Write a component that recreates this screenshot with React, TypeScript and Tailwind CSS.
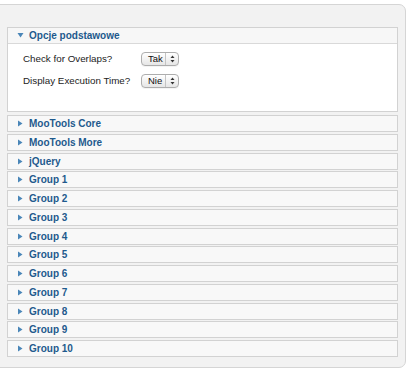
import React from "react";

const groups = [
  "MooTools Core",
  "MooTools More",
  "jQuery",
  "Group 1",
  "Group 2",
  "Group 3",
  "Group 4",
  "Group 5",
  "Group 6",
  "Group 7",
  "Group 8",
  "Group 9",
  "Group 10",
];

const font = { fontFamily: '"Liberation Sans", Arial, sans-serif' };

const ArrowRight = () => (
  <svg width="5" height="7" viewBox="0 0 5 7" className="shrink-0">
    <path d="M0 0.5 L4.5 3.5 L0 6.5 Z" fill="#4a86b8" />
  </svg>
);

const ArrowDown = () => (
  <svg width="7" height="5" viewBox="0 0 7 5" className="shrink-0">
    <path d="M0.5 0 L6.5 0 L3.5 4.5 Z" fill="#4a86b8" />
  </svg>
);

const FakeSelect: React.FC<{ value: string }> = ({ value }) => (
  <div className="flex h-[14px] w-[38px] items-center rounded-[4px] border border-[#adadad] bg-gradient-to-b from-white to-[#e6e6e6] shadow-[0_1px_0_#f4f4f4]">
    <span className="w-[23px] pl-[6px] text-[9.5px] leading-none text-[#111]">
      {value}
    </span>
    <div className="h-full w-px bg-[#c4c4c4]" />
    <svg width="5" height="8" viewBox="0 0 5 8" className="ml-[4px]">
      <path d="M0.5 3 L2.5 0.5 L4.5 3 Z" fill="#333" />
      <path d="M0.5 5 L2.5 7.5 L4.5 5 Z" fill="#333" />
    </svg>
  </div>
);

const Row: React.FC<{ label: string; value: string }> = ({ label, value }) => (
  <div className="flex h-[22px] items-center">
    <span className="w-[118px] text-[9.8px] text-[#222]">{label}</span>
    <FakeSelect value={value} />
  </div>
);

export default function App() {
  return (
    <div className="h-[371px] w-[414px] bg-white" style={font}>
      <div className="ml-[-1px] mt-[4px] flex w-[407px] flex-col rounded-r-[7px] border border-[#d5d5d5] bg-[#f2f2f2] pb-[10px] pl-[7px] pr-[7px] pt-[22px]">
        <div className="flex flex-col border border-[#d2d2d2] bg-white">
          <div className="flex h-[16px] items-center gap-[5px] border-b border-[#d9d9d9] bg-[#f7f7f7] pl-[9px]">
            <ArrowDown />
            <span className="text-[10px] font-bold text-[#1e5a8d]">Opcje podstawowe</span>
          </div>
          <div className="flex h-[67px] flex-col pl-[15px] pt-[4px]">
            <Row label="Check for Overlaps?" value="Tak" />
            <Row label="Display Execution Time?" value="Nie" />
          </div>
        </div>
        <div className="mt-[3px] flex flex-col gap-[1.75px]">
          {groups.map((g) => (
            <div
              key={g}
              className="flex h-[17px] items-center gap-[6px] border border-[#d2d2d2] bg-[#f8f8f8] pl-[10px]"
            >
              <ArrowRight />
              <span className="text-[10px] font-bold text-[#1e5a8d]">{g}</span>
            </div>
          ))}
        </div>
      </div>
    </div>
  );
}
